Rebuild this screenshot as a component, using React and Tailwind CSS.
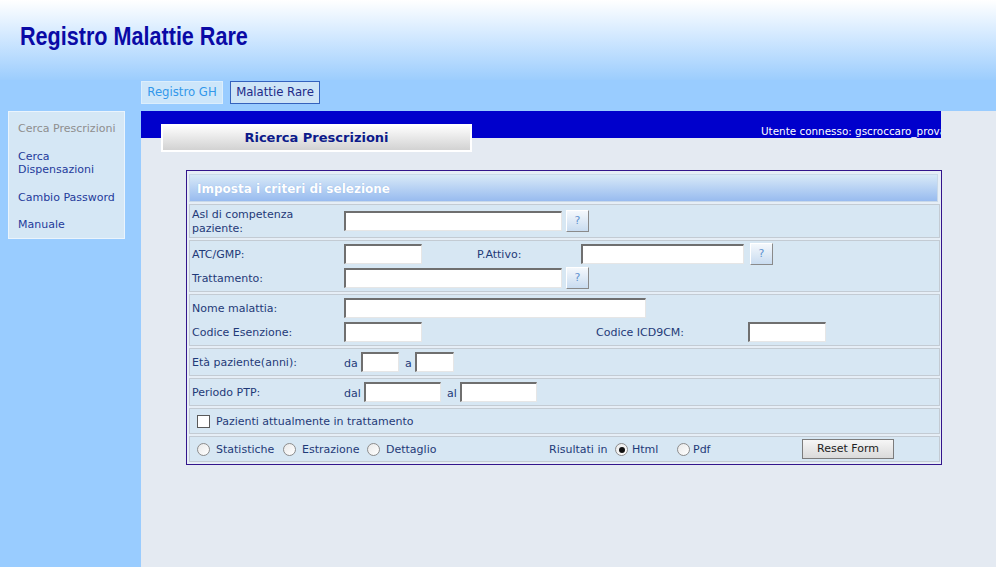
import React from 'react';

const Field = ({ w, className = '' }) => (
  <span
    className={`inline-block h-[20px] shrink-0 bg-white border-t-2 border-l-2 border-b border-r border-t-[#6f6f6f] border-l-[#6f6f6f] border-b-[#e6e6e6] border-r-[#e6e6e6] ${w} ${className}`}
  />
);

const Help = ({ className = '' }) => (
  <span
    className={`flex h-[22px] w-[23px] shrink-0 items-center justify-center border border-t-white border-l-white border-b-[#8a8a8a] border-r-[#8a8a8a] bg-gradient-to-b from-[#f4f8fc] to-[#c9dcf0] text-[11px] text-[#5f93d0] ${className}`}
  >
    ?
  </span>
);

const Radio = ({ checked = false, className = '' }) => (
  <span
    className={`flex h-[13px] w-[13px] shrink-0 items-center justify-center rounded-full border border-[#8c8c8c] bg-gradient-to-br from-[#e9e9e9] to-white ${className}`}
  >
    {checked && <span className="h-[6px] w-[6px] rounded-full bg-[#111]" />}
  </span>
);

const Row = ({ h, className = '', children }) => (
  <div className={`flex border border-[#c3cbd3] bg-[#d7e7f3] pl-[2px] ${h} ${className}`}>
    {children}
  </div>
);

const Label = ({ children }) => <span className="mt-[2px] w-[152px] shrink-0">{children}</span>;

const Text = ({ className = '', children }) => (
  <span className={`mt-[2px] shrink-0 ${className}`}>{children}</span>
);

export default function App() {
  const menu = [
    { label: 'Cerca Prescrizioni', active: true },
    { label: 'Cerca Dispensazioni', narrow: true },
    { label: 'Cambio Password' },
    { label: 'Manuale' },
  ];

  return (
    <div className="flex h-[567px] w-[996px] flex-col overflow-hidden bg-[#99ccff] font-['DejaVu_Sans',sans-serif] text-[11px] text-[#1f3a78]">
      {/* header */}
      <div className="h-[80px] shrink-0 bg-gradient-to-b from-white to-[#9ccdfd] pl-[20px] pt-[21px]">
        <h1 className="inline-block origin-left scale-x-[0.83] font-['Liberation_Sans',sans-serif] text-[26px] font-bold leading-[30px] text-[#0a0aa6]">
          Registro Malattie Rare
        </h1>
      </div>

      {/* tabs */}
      <div className="flex h-[31px] shrink-0 gap-[7px] pl-[141px] pt-[1px]">
        <span className="flex h-[23px] w-[82px] items-center justify-center border border-[#dceefc] bg-[#cde6fa] pt-[1px] text-[11.7px] text-[#3398ea]">
          Registro GH
        </span>
        <span className="flex h-[23px] w-[90px] items-center justify-center border border-[#3462bd] bg-[#cde4f7] pt-[1px] text-[11.7px] text-[#202a88]">
          Malattie Rare
        </span>
      </div>

      <div className="flex flex-1">
        {/* sidebar */}
        <aside className="w-[141px] shrink-0 pl-[8px]">
          <div className="flex h-[128px] w-[117px] flex-col gap-[14px] border border-[#eaf4fd] bg-[#d5e7f5] pl-[9px] pt-[10px]">
            {menu.map((m) => (
              <span
                key={m.label}
                className={`leading-[13px] ${m.narrow ? 'mb-[1px] w-[80px]' : ''} ${m.active ? 'mb-[1px] text-[#8e8e8e]' : 'text-[#1f3b9b]'}`}
              >
                {m.label}
              </span>
            ))}
          </div>
        </aside>

        {/* main */}
        <main className="flex-1 bg-[#e4eaf2]">
          <div className="w-[800px]">
            <div className="flex h-[27px] items-end overflow-hidden whitespace-nowrap bg-[#0000cc] pl-[620px] text-[10.4px] leading-[14px] text-white">
              Utente connesso: gscroccaro_prova
            </div>

            <div className="relative ml-[20px] -mt-[14px] flex h-[28px] w-[311px] items-center justify-center border-2 border-white bg-gradient-to-b from-[#fdfdfd] to-[#d2d2d2] text-[13px] font-bold text-[#0c1a8a]">
              Ricerca Prescrizioni
            </div>

            {/* form */}
            <div className="ml-[45px] mt-[18px] flex w-[756px] flex-col gap-[2px] border border-[#33158c] bg-[#e6eef6] pb-[2px] pl-[2px] pr-[1px] pt-[3px]">
              <div className="mr-[2px] flex h-[28px] items-center border border-[#c9d9e9] bg-gradient-to-b from-[#d8e9f7] to-[#98bbef] pl-[7px] pt-[1px] text-[12px] font-bold text-white [text-shadow:0_0_1px_#8aaee0]">
                Imposta i criteri di selezione
              </div>

              <Row h="h-[34px]" className="items-center">
                <span className="mt-[2px] w-[152px] shrink-0 leading-[14px]">
                  Asl di competenza
                  <br />
                  paziente:
                </span>
                <Field w="w-[218px]" />
                <Help className="ml-[4px]" />
              </Row>

              <Row h="h-[52px]" className="flex-col justify-center">
                <div className="flex h-[24px] items-center">
                  <Label>ATC/GMP:</Label>
                  <Field w="w-[78px]" />
                  <Text className="ml-[55px] w-[104px]">P.Attivo:</Text>
                  <Field w="w-[163px]" />
                  <Help className="ml-[6px]" />
                </div>
                <div className="flex h-[24px] items-center">
                  <Label>Trattamento:</Label>
                  <Field w="w-[218px]" />
                  <Help className="ml-[4px]" />
                </div>
              </Row>

              <Row h="h-[52px]" className="flex-col justify-center">
                <div className="flex h-[24px] items-center">
                  <Label>Nome malattia:</Label>
                  <Field w="w-[302px]" />
                </div>
                <div className="flex h-[24px] items-center">
                  <Label>Codice Esenzione:</Label>
                  <Field w="w-[78px]" />
                  <Text className="ml-[174px] w-[152px]">Codice ICD9CM:</Text>
                  <Field w="w-[78px]" />
                </div>
              </Row>

              <Row h="h-[28px]" className="items-center">
                <Label>Età paziente(anni):</Label>
                <Text className="mt-[4px] w-[17px]">da</Text>
                <Field w="w-[38px]" />
                <Text className="ml-[6px] mt-[4px] w-[10px]">a</Text>
                <Field w="w-[39px]" />
              </Row>

              <Row h="h-[28px]" className="items-center">
                <Label>Periodo PTP:</Label>
                <Text className="mt-[4px] w-[20px]">dal</Text>
                <Field w="w-[77px]" />
                <Text className="ml-[6px] mt-[4px] w-[13px]">al</Text>
                <Field w="w-[77px]" />
              </Row>

              <Row h="h-[26px]" className="items-center">
                <span className="ml-[5px] mt-[1px] h-[13px] w-[13px] shrink-0 border border-[#5a5a5a] bg-white" />
                <Text className="ml-[6px]">Pazienti attualmente in trattamento</Text>
              </Row>

              <Row h="h-[26px]" className="items-center">
                <Radio className="ml-[5px] mt-[1px]" />
                <Text className="ml-[6px] w-[67px]">Statistiche</Text>
                <Radio className="mt-[1px]" />
                <Text className="ml-[6px] w-[65px]">Estrazione</Text>
                <Radio className="mt-[1px]" />
                <Text className="ml-[6px] w-[163px]">Dettaglio</Text>
                <Text className="w-[66px]">Risultati in</Text>
                <Radio checked className="mt-[1px]" />
                <Text className="ml-[4px] w-[45px]">Html</Text>
                <Radio className="mt-[1px]" />
                <Text className="ml-[3px] w-[109px]">Pdf</Text>
                <span className="flex h-[20px] w-[92px] shrink-0 items-center justify-center border border-[#7c7c7c] bg-gradient-to-b from-[#f6f6f6] to-[#dadada] text-[#222]">
                  Reset Form
                </span>
              </Row>
            </div>
          </div>
        </main>
      </div>
    </div>
  );
}
